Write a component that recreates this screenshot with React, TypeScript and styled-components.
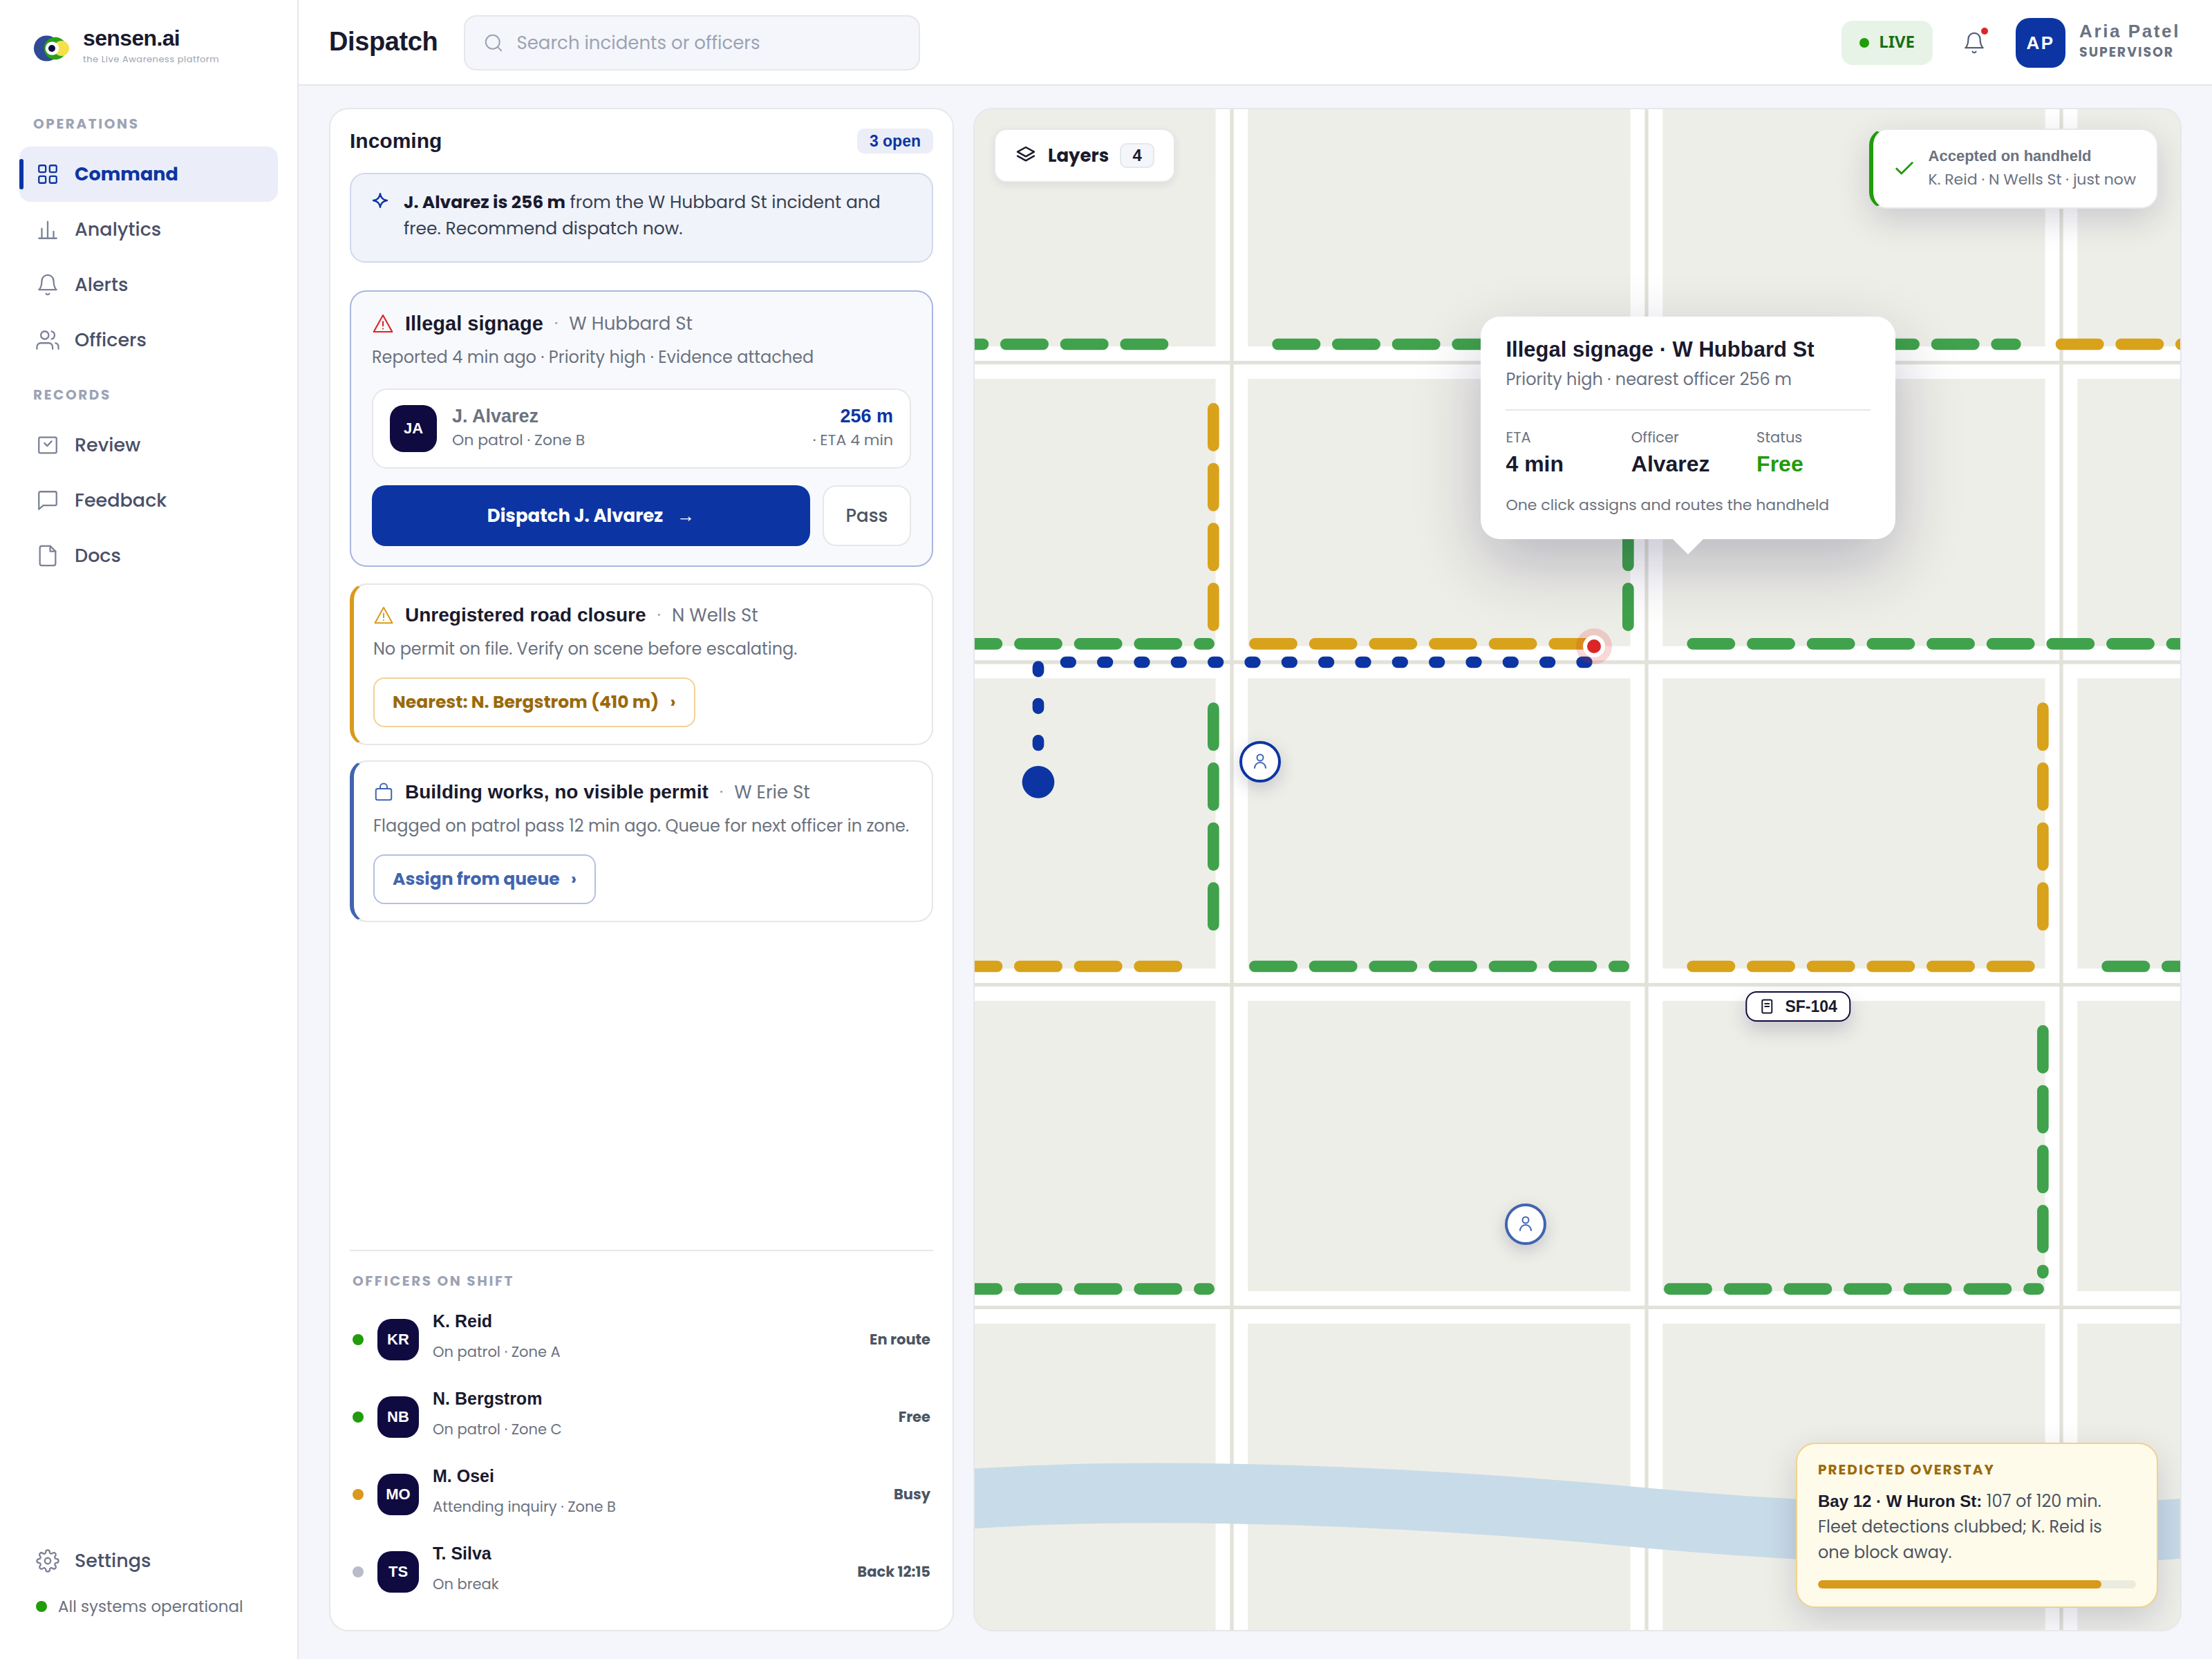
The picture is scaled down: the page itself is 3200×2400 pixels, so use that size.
import React from "react";
import styled, { createGlobalStyle, css } from "styled-components";

const c = {
  ink: "#1a1a2e",
  text: "#4b5563",
  muted: "#6b7280",
  faint: "#9ca3b4",
  line: "#e6e7e9",
  bg: "#f4f6fb",
  blue: "#0c35a3",
  blueSoft: "#ebeef8",
  steel: "#4065b0",
  navy: "#0f0a40",
  green: "#219c0a",
  amber: "#d99a1b",
  brown: "#9a6a0c",
  red: "#dc2626",
};
const head = `"Liberation Sans", Arial, sans-serif`;
const body = `Poppins, "Open Sans", sans-serif`;

const Global = createGlobalStyle`
  *, *::before, *::after { box-sizing: border-box; }
  body { margin: 0; background: ${c.bg}; color: ${c.ink}; font-family: ${body}; font-size: 26px; line-height: 1.5; }
  button, input { font: inherit; color: inherit; }
  h1, h2, h3, p, ul, dl, dd { margin: 0; padding: 0; }
  ul { list-style: none; }
  a { color: inherit; text-decoration: none; }
`;

const Shell = styled.div`
  display: grid;
  grid-template-columns: 432px minmax(0, 1fr);
  min-height: 100vh;
`;

/* ---------- sidebar ---------- */
const Sidebar = styled.aside`
  display: flex;
  flex-direction: column;
  padding: 34px 28px 50px;
  background: #fff;
  border-right: 2px solid ${c.line};
`;
const Brand = styled.div`
  display: flex;
  align-items: center;
  gap: 20px;
  height: 72px;
  padding: 0 20px;
  margin-bottom: 34px;
`;
const BrandText = styled.div`
  padding-bottom: 8px;
`;
const BrandName = styled.div`
  font: 700 32px/40px ${head};
  letter-spacing: -0.02em;
`;
const Tagline = styled.div`
  font-size: 13px;
  line-height: 22px;
  letter-spacing: 0.04em;
  color: ${c.faint};
`;
const Caption = styled.h2`
  font-size: 20px;
  line-height: 30px;
  font-weight: 700;
  letter-spacing: 0.13em;
  text-transform: uppercase;
  color: ${c.faint};
`;
const NavCaption = styled(Caption)`
  padding: 0 20px;
  margin: 24px 0 18px;
`;
const NavItem = styled.a<{ $active?: boolean }>`
  position: relative;
  display: flex;
  align-items: center;
  gap: 22px;
  height: 80px;
  padding: 0 24px;
  border-radius: 16px;
  font-size: 27px;
  font-weight: 500;
  color: #4a5068;
  svg { color: #7b8196; }
  ${(p) =>
    p.$active &&
    css`
      background: ${c.blueSoft};
      color: ${c.blue};
      font-weight: 700;
      svg { color: ${c.blue}; }
      &::before {
        content: "";
        position: absolute;
        left: 0;
        top: 18px;
        bottom: 18px;
        width: 6px;
        border-radius: 4px;
        background: ${c.blue};
      }
    `}
`;
const SideFoot = styled.div`
  margin-top: auto;
`;
const System = styled.div`
  display: flex;
  align-items: center;
  gap: 16px;
  height: 52px;
  padding: 0 24px;
  font-size: 23px;
  color: ${c.muted};
`;
const Dot = styled.span<{ $color: string; $size: number }>`
  flex: none;
  width: ${(p) => p.$size}px;
  height: ${(p) => p.$size}px;
  border-radius: 50%;
  background: ${(p) => p.$color};
`;

/* ---------- top bar ---------- */
const Main = styled.div`
  display: flex;
  flex-direction: column;
  min-width: 0;
`;
const Topbar = styled.header`
  display: flex;
  align-items: center;
  padding: 22px 44px 20px;
  background: #fff;
  border-bottom: 2px solid ${c.line};
`;
const PageTitle = styled.h1`
  padding-bottom: 4px;
  font: 700 38px/48px ${head};
  letter-spacing: -0.01em;
`;
const Search = styled.label`
  display: flex;
  align-items: center;
  gap: 18px;
  width: 660px;
  height: 80px;
  margin-left: 38px;
  padding: 0 26px;
  border: 2px solid ${c.line};
  border-radius: 18px;
  background: ${c.bg};
  color: ${c.faint};
  input {
    flex: 1;
    min-width: 0;
    padding: 0;
    border: 0;
    outline: 0;
    background: none;
    font-size: 26px;
  }
  input::placeholder { color: ${c.faint}; opacity: 1; }
`;
const TopRight = styled.div`
  display: flex;
  align-items: center;
  margin-left: auto;
`;
const Live = styled.span`
  display: flex;
  align-items: center;
  gap: 14px;
  height: 64px;
  padding: 0 26px;
  border-radius: 16px;
  background: #e7f3e6;
  color: #17701a;
  font: 700 24px/32px "Noto Sans", sans-serif;
`;
const LiveText = styled.span`
  padding-bottom: 4px;
`;
const BellButton = styled.button`
  position: relative;
  display: grid;
  place-items: center;
  width: 68px;
  height: 68px;
  margin: 0 26px;
  padding: 0;
  border: 0;
  background: none;
  color: #5a6078;
`;
const BellDot = styled.span`
  position: absolute;
  top: 12px;
  right: 14px;
  width: 10px;
  height: 10px;
  border-radius: 50%;
  background: ${c.red};
`;
const Avatar = styled.span<{ $size: number; $bg?: string }>`
  display: grid;
  place-items: center;
  flex: none;
  width: ${(p) => p.$size}px;
  height: ${(p) => p.$size}px;
  border-radius: 20px;
  background: ${(p) => p.$bg || c.navy};
  color: #fff;
  font: 700 22px/28px ${head};
`;
const UserAvatar = styled(Avatar)`
  font-size: 26px;
  letter-spacing: 0.1em;
`;
const User = styled.div`
  display: flex;
  align-items: center;
  gap: 20px;
  color: ${c.muted};
`;
const UserText = styled.div`
  padding: 0 2px 4px 0;
`;
const UserName = styled.div`
  font: 700 26px/32px ${head};
  letter-spacing: 0.1em;
`;
const UserRole = styled.div`
  font-size: 19px;
  line-height: 30px;
  font-weight: 700;
  letter-spacing: 0.1em;
`;

/* ---------- incoming panel ---------- */
const Content = styled.main`
  flex: 1;
  display: grid;
  grid-template-columns: 904px minmax(0, 1fr);
  gap: 28px;
  padding: 32px 44px 40px;
`;
const Panel = styled.section`
  display: flex;
  flex-direction: column;
  padding: 28px;
  border: 2px solid ${c.line};
  border-radius: 28px;
  background: #fff;
`;
const PanelHead = styled.div`
  display: flex;
  align-items: center;
  justify-content: space-between;
  height: 36px;
`;
const PanelTitle = styled.h2`
  font: 700 30px/36px ${head};
`;
const CountBadge = styled.span`
  padding: 0 18px;
  border-radius: 10px;
  background: ${c.blueSoft};
  color: ${c.blue};
  font: 700 23px/36px ${head};
`;
const Advice = styled.p`
  display: flex;
  gap: 20px;
  margin: 28px 0 40px;
  padding: 22px 28px 28px;
  border: 2px solid #cfd9ee;
  border-radius: 22px;
  background: #f0f3fa;
  color: #374151;
  font-size: 25px;
  line-height: 38px;
  svg { flex: none; margin-top: 2px; color: ${c.blue}; }
  strong { font-weight: 700; color: ${c.ink}; }
`;
const Cards = styled.div`
  display: flex;
  flex-direction: column;
  gap: 22px;
`;
const Card = styled.article<{ $accent?: string }>`
  border: 2px solid ${c.line};
  border-radius: 24px;
  padding: 24px 28px 24px;
  ${(p) => p.$accent && css`border-left: 6px solid ${p.$accent};`}
`;
const LeadCard = styled(Card)`
  margin-bottom: 2px;
  padding: 26px 30px 28px;
  border-color: #a9b7df;
  background: #f8f9fd;
`;
const CardHead = styled.div<{ $color: string }>`
  display: flex;
  align-items: center;
  height: 40px;
  svg { margin-right: 16px; color: ${(p) => p.$color}; }
`;
const CardTitle = styled.h3<{ $lead?: boolean }>`
  font: 700 ${(p) => (p.$lead ? 29 : 28)}px/40px ${head};
`;
const Street = styled.span`
  font-size: 26px;
  color: ${c.muted};
  &::before { content: "·"; margin: 0 16px; color: ${c.faint}; }
`;
const CardNote = styled.p`
  margin-top: 10px;
  font-size: 24px;
  line-height: 38px;
  color: ${c.muted};
`;
const OfficerBox = styled.div`
  display: flex;
  align-items: center;
  gap: 22px;
  margin: 26px 0 24px;
  padding: 21px 24px;
  border: 2px solid ${c.line};
  border-radius: 22px;
  background: #fff;
`;
const Lines = styled.div<{ $end?: boolean }>`
  ${(p) => p.$end && "margin-left: auto; text-align: right;"}
`;
const OfficerName = styled.div<{ $color: string }>`
  font: 700 27px/34px ${head};
  color: ${(p) => p.$color};
`;
const Small = styled.div`
  font-size: 22px;
  line-height: 36px;
  color: ${c.muted};
`;
const Actions = styled.div`
  display: flex;
  gap: 18px;
`;
const Button = styled.button`
  height: 88px;
  border: 2px solid ${c.line};
  border-radius: 20px;
  background: #fff;
  font-size: 26px;
`;
const Primary = styled(Button)`
  display: flex;
  align-items: center;
  justify-content: center;
  gap: 20px;
  flex: 1;
  border: 0;
  background: ${c.blue};
  color: #fff;
  font-weight: 700;
`;
const Secondary = styled(Button)`
  width: 128px;
  padding: 0;
  color: ${c.text};
  font-weight: 500;
`;
const Outline = styled.button<{ $color: string; $line: string }>`
  display: flex;
  align-items: center;
  gap: 16px;
  height: 72px;
  margin-top: 22px;
  padding: 0 26px;
  border: 2px solid ${(p) => p.$line};
  border-radius: 16px;
  background: #fff;
  color: ${(p) => p.$color};
  font-size: 25px;
  font-weight: 700;
`;
const Shift = styled.section`
  margin-top: auto;
  border-top: 2px solid ${c.line};
  padding: 28px 4px 0;
`;
const ShiftList = styled.ul`
  margin-top: 14px;
`;
const ShiftRow = styled.li`
  display: flex;
  align-items: center;
  gap: 20px;
  height: 112px;
`;
const ShiftName = styled.div`
  font: 700 25px/36px ${head};
`;
const ShiftNote = styled.div`
  font-size: 21px;
  line-height: 54px;
  color: ${c.muted};
`;
const ShiftState = styled.span`
  margin-left: auto;
  font-size: 21px;
  font-weight: 700;
  color: ${c.text};
`;

/* ---------- map ---------- */
const MapPanel = styled.section`
  position: relative;
  overflow: hidden;
  border: 2px solid ${c.line};
  border-radius: 28px;
  background: #eeeee8;
  > svg { position: absolute; inset: 0; width: 100%; height: 100%; }
`;
const shadow = "0 16px 48px rgba(15, 10, 64, 0.16)";
const LayersButton = styled.button`
  position: absolute;
  top: 28px;
  left: 28px;
  display: flex;
  align-items: center;
  gap: 16px;
  height: 78px;
  padding: 0 28px;
  border: 2px solid ${c.line};
  border-radius: 18px;
  background: #fff;
  font-size: 26px;
  font-weight: 700;
  box-shadow: 0 4px 12px rgba(15, 10, 64, 0.08);
`;
const LayerCount = styled.span`
  width: 50px;
  border: 2px solid ${c.line};
  border-radius: 10px;
  background: ${c.bg};
  font: 700 24px/32px ${head};
  text-align: center;
`;
const Toast = styled.div`
  position: absolute;
  top: 28px;
  right: 32px;
  display: flex;
  align-items: center;
  gap: 18px;
  padding: 22px 30px 22px 28px;
  border: 2px solid ${c.line};
  border-left: 6px solid ${c.green};
  border-radius: 24px;
  background: #fff;
  color: ${c.muted};
  box-shadow: ${shadow};
  svg { color: ${c.green}; }
`;
const ToastTitle = styled.div`
  font: 700 22px/32px ${head};
`;
const Pin = styled.div<{ $x: number; $y: number }>`
  position: absolute;
  left: ${(p) => p.$x}%;
  top: ${(p) => p.$y}%;
  transform: translate(-50%, -50%);
`;
const OfficerPin = styled(Pin)<{ $ring: string }>`
  display: grid;
  place-items: center;
  width: 60px;
  height: 60px;
  border: 4px solid ${(p) => p.$ring};
  border-radius: 50%;
  background: #fff;
  color: ${c.steel};
  box-shadow: 0 8px 24px rgba(15, 10, 64, 0.18);
`;
const IncidentPin = styled(Pin)`
  width: 32px;
  height: 32px;
  border: 6px solid #fff;
  border-radius: 50%;
  background: ${c.red};
  box-shadow: 0 0 0 10px rgba(220, 38, 38, 0.18);
`;
const VehiclePin = styled(Pin)`
  display: flex;
  align-items: center;
  gap: 14px;
  height: 44px;
  padding: 0 17px;
  border: 2px solid ${c.navy};
  border-radius: 16px;
  background: #fff;
  font: 700 23px/40px ${head};
  white-space: nowrap;
  box-shadow: 0 12px 28px rgba(15, 10, 64, 0.18);
`;
const Popup = styled.div`
  position: absolute;
  left: 59.2%;
  top: 300px;
  transform: translateX(-50%);
  width: 600px;
  padding: 28px 36px 32px;
  border-radius: 28px;
  background: #fff;
  box-shadow: 0 36px 96px rgba(15, 10, 64, 0.24);
  &::after {
    content: "";
    position: absolute;
    left: 50%;
    top: 100%;
    margin-left: -22px;
    border: 22px solid transparent;
    border-bottom: 0;
    border-top-color: #fff;
  }
`;
const PopupTitle = styled.h3`
  font: 700 31px/40px ${head};
`;
const PopupNote = styled.p`
  padding: 4px 0 24px;
  border-bottom: 2px solid ${c.line};
  font-size: 24px;
  line-height: 38px;
  color: ${c.muted};
`;
const Facts = styled.dl`
  display: grid;
  grid-template-columns: repeat(3, 1fr);
  gap: 16px;
  margin-top: 22px;
  dt { font-size: 21px; line-height: 34px; color: ${c.muted}; }
  dd { font: 700 32px/42px ${head}; }
`;
const FreeValue = styled.dd`
  color: ${c.green};
`;
const PopupFoot = styled.p`
  margin-top: 22px;
  font-size: 22px;
  line-height: 34px;
  color: ${c.muted};
`;
const Overstay = styled.div`
  position: absolute;
  right: 32px;
  bottom: 32px;
  width: 524px;
  padding: 22px 30px 26px;
  border: 2px solid #f0d28a;
  border-radius: 28px;
  background: #fffbea;
  box-shadow: ${shadow};
`;
const OverstayTitle = styled(Caption)`
  color: ${c.brown};
  letter-spacing: 0.1em;
`;
const OverstayText = styled.p`
  margin: 12px 0 22px;
  font-size: 24px;
  line-height: 37px;
  color: ${c.text};
  strong { font-family: ${head}; color: ${c.ink}; }
`;
const Track = styled.div`
  height: 12px;
  border-radius: 6px;
  background: #ecebdf;
  overflow: hidden;
`;
const Fill = styled.div`
  height: 100%;
  border-radius: 6px;
  background: ${c.amber};
`;

/* ---------- drawings ---------- */
const Icon = ({ size = 34, w = 1.6, children }: { size?: number; w?: number; children: React.ReactNode }) => (
  <svg width={size} height={size} viewBox="0 0 24 24" fill="none" stroke="currentColor" strokeWidth={w} strokeLinecap="round" strokeLinejoin="round" aria-hidden="true">
    {children}
  </svg>
);
const bell = (
  <>
    <path d="M18 8A6 6 0 0 0 6 8c0 7-3 9-3 9h18s-3-2-3-9" />
    <path d="M13.73 21a2 2 0 0 1-3.46 0" />
  </>
);
const warning = (
  <>
    <path d="M12 3 22 21H2z" />
    <path d="M12 10v4.5M12 17.6v.1" />
  </>
);
const icons = {
  grid: (
    <>
      <rect x="3" y="3" width="7" height="7" rx="1.5" />
      <rect x="14" y="3" width="7" height="7" rx="1.5" />
      <rect x="3" y="14" width="7" height="7" rx="1.5" />
      <rect x="14" y="14" width="7" height="7" rx="1.5" />
    </>
  ),
  chart: <path d="M3 21h18M6 21V11M12 21V4M18 21v-7" />,
  bell,
  users: (
    <>
      <path d="M17 21v-2a4 4 0 0 0-4-4H5a4 4 0 0 0-4 4v2" />
      <circle cx="9" cy="7" r="4" />
      <path d="M23 21v-2a4 4 0 0 0-3-3.87M16 3.13a4 4 0 0 1 0 7.75" />
    </>
  ),
  review: (
    <>
      <rect x="3" y="4" width="18" height="16" rx="1.5" />
      <path d="m8.700 10 2.800 2.800 4.500-4.800" />
    </>
  ),
  chat: <path d="M21 15.500a1.500 1.500 0 0 1-1.500 1.500H7.500L3 21V4.500A1.500 1.500 0 0 1 4.500 3h15A1.500 1.500 0 0 1 21 4.500z" />,
  doc: (
    <>
      <path d="M14.500 2H6a2 2 0 0 0-2 2v16a2 2 0 0 0 2 2h12a2 2 0 0 0 2-2V7.500z" />
      <path d="M14.500 2v5.500H20" />
    </>
  ),
  gear: (
    <>
      <circle cx="12" cy="12" r="3" />
      <path d="M19.4 15a1.65 1.65 0 0 0 .33 1.82l.06.06a2 2 0 0 1 0 2.83 2 2 0 0 1-2.83 0l-.06-.06a1.65 1.65 0 0 0-1.82-.33 1.65 1.65 0 0 0-1 1.51V21a2 2 0 0 1-2 2 2 2 0 0 1-2-2v-.09A1.65 1.65 0 0 0 9 19.4a1.65 1.65 0 0 0-1.82.33l-.06.06a2 2 0 0 1-2.83 0 2 2 0 0 1 0-2.83l.06-.06a1.65 1.65 0 0 0 .33-1.82 1.65 1.65 0 0 0-1.51-1H3a2 2 0 0 1-2-2 2 2 0 0 1 2-2h.09A1.65 1.65 0 0 0 4.6 9a1.65 1.65 0 0 0-.33-1.82l-.06-.06a2 2 0 0 1 0-2.83 2 2 0 0 1 2.83 0l.06.06a1.65 1.65 0 0 0 1.82.33H9a1.65 1.65 0 0 0 1-1.51V3a2 2 0 0 1 2-2 2 2 0 0 1 2 2v.09a1.65 1.65 0 0 0 1 1.51 1.65 1.65 0 0 0 1.82-.33l.06-.06a2 2 0 0 1 2.83 0 2 2 0 0 1 0 2.83l-.06.06a1.65 1.65 0 0 0-.33 1.82V9a1.65 1.65 0 0 0 1.51 1H21a2 2 0 0 1 2 2 2 2 0 0 1-2 2h-.09a1.65 1.65 0 0 0-1.51 1z" />
    </>
  ),
};

const Logo = () => (
  <svg width="52" height="38" viewBox="0 0 52 38" aria-hidden="true">
    <circle cx="19.500" cy="19" r="18.600" fill="#2f4a96" />
    <circle cx="32" cy="19" r="16.200" fill="#2aa01a" />
    <circle cx="41" cy="19" r="11" fill="#f6e04a" />
    <circle cx="27.500" cy="19" r="9.800" fill="#fff" />
    <circle cx="27" cy="19" r="5" fill="#0f0a40" />
  </svg>
);

const G = "#40a24c";
const A = "#d9a21b";
const curbs: [string, string][] = [
  ["M200 102H320", G],
  ["M370 102H690", G],
  ["M710 102H900", A],
  ["M180 232H340", G],
  ["M360 232H510", A],
  ["M550 232H900", G],
  ["M180 372H330", A],
  ["M360 372H520", G],
  ["M550 372H700", A],
  ["M730 372H900", G],
  ["M180 512H340", G],
  ["M540 512H700", G],
  ["M342 130V230", A],
  ["M342 260V360", G],
  ["M522 130V230", G],
  ["M702 260V360", A],
  ["M702 400V505", G],
];
const roads = "M0 110H1000M0 240H1000M0 380H1000M0 520H1000M170 0V660M350 0V660M530 0V660M710 0V660M890 0V660";

const CityMap = () => (
  <svg viewBox="0 0 1000 660" preserveAspectRatio="xMidYMid slice" fill="none" aria-hidden="true">
    <path d={roads} stroke="#fff" strokeWidth="14" />
    <path d={roads} stroke="#e2e2da" strokeWidth="1.6" />
    <path
      d="M0 640C100 618 170 607 238 603C320 597.500 430 602 520 610.500C610 619 690 621.500 762 616C850 609 920 600 1000 590"
      stroke="#c8dbe8"
      strokeWidth="26"
    />
    <g strokeWidth="5" strokeLinecap="round" strokeDasharray="16 10">
      {curbs.map(([d, color]) => (
        <path key={d} d={d} stroke={color} />
      ))}
    </g>
    <path d="M266 292V240H506" stroke={c.blue} strokeWidth="5" strokeLinecap="round" strokeLinejoin="round" strokeDasharray="2 14" />
    <circle cx="266" cy="292" r="7" fill={c.blue} />
  </svg>
);

const Person = () => (
  <Icon size={30}>
    <circle cx="12" cy="7.200" r="3.600" />
    <path d="M5.600 19.200a6.400 6.400 0 0 1 12.800 0" />
  </Icon>
);

/* ---------- data ---------- */
const operations = [
  { label: "Command", icon: icons.grid, active: true },
  { label: "Analytics", icon: icons.chart },
  { label: "Alerts", icon: icons.bell },
  { label: "Officers", icon: icons.users },
];
const records = [
  { label: "Review", icon: icons.review },
  { label: "Feedback", icon: icons.chat },
  { label: "Docs", icon: icons.doc },
];
const officers = [
  { initials: "KR", name: "K. Reid", note: "On patrol · Zone A", state: "En route", color: c.green },
  { initials: "NB", name: "N. Bergstrom", note: "On patrol · Zone C", state: "Free", color: c.green },
  { initials: "MO", name: "M. Osei", note: "Attending inquiry · Zone B", state: "Busy", color: c.amber },
  { initials: "TS", name: "T. Silva", note: "On break", state: "Back 12:15", color: "#b9bbc9" },
];
const stay = { used: 107, limit: 120 };

type Nav = { label: string; icon: React.ReactNode; active?: boolean };
const NavList = ({ items }: { items: Nav[] }) => (
  <>
    {items.map((n) => (
      <NavItem key={n.label} href="#" $active={n.active} aria-current={n.active ? "page" : undefined}>
        <Icon>{n.icon}</Icon>
        {n.label}
      </NavItem>
    ))}
  </>
);

export default function App() {
  return (
    <>
      <Global />
      <Shell>
        <Sidebar>
          <Brand>
            <Logo />
            <BrandText>
              <BrandName>sensen.ai</BrandName>
              <Tagline>the Live Awareness platform</Tagline>
            </BrandText>
          </Brand>
          <nav>
            <NavCaption>Operations</NavCaption>
            <NavList items={operations} />
            <NavCaption>Records</NavCaption>
            <NavList items={records} />
          </nav>
          <SideFoot>
            <NavList items={[{ label: "Settings", icon: icons.gear }]} />
            <System>
              <Dot $color={c.green} $size={16} />
              All systems operational
            </System>
          </SideFoot>
        </Sidebar>

        <Main>
          <Topbar>
            <PageTitle>Dispatch</PageTitle>
            <Search>
              <Icon size={30}>
                <circle cx="11" cy="11" r="8" />
                <path d="m21 21-4.300-4.300" />
              </Icon>
              <input type="search" placeholder="Search incidents or officers" aria-label="Search incidents or officers" />
            </Search>
            <TopRight>
              <Live>
                <Dot $color={c.green} $size={14} />
                <LiveText>LIVE</LiveText>
              </Live>
              <BellButton aria-label="Notifications">
                <Icon>{bell}</Icon>
                <BellDot />
              </BellButton>
              <User>
                <UserAvatar $size={72} $bg={c.blue}>AP</UserAvatar>
                <UserText>
                  <UserName>Aria Patel</UserName>
                  <UserRole>SUPERVISOR</UserRole>
                </UserText>
              </User>
            </TopRight>
          </Topbar>

          <Content>
            <Panel>
              <PanelHead>
                <PanelTitle>Incoming</PanelTitle>
                <CountBadge>3 open</CountBadge>
              </PanelHead>
              <Advice>
                <Icon size={28} w={2}>
                  <path d="M12 3.500C12.600 8.600 15 11.200 20.500 12 15 12.800 12.600 15.400 12 20.500 11.400 15.400 9 12.800 3.500 12 9 11.200 11.400 8.600 12 3.500z" />
                </Icon>
                <span>
                  <strong>J. Alvarez is 256 m</strong> from the W Hubbard St incident and free. Recommend dispatch now.
                </span>
              </Advice>
              <Cards>
                <LeadCard>
                  <CardHead $color={c.red}>
                    <Icon size={32}>{warning}</Icon>
                    <CardTitle $lead>Illegal signage</CardTitle>
                    <Street>W Hubbard St</Street>
                  </CardHead>
                  <CardNote>Reported 4 min ago · Priority high · Evidence attached</CardNote>
                  <OfficerBox>
                    <Avatar $size={68}>JA</Avatar>
                    <Lines>
                      <OfficerName $color={c.muted}>J. Alvarez</OfficerName>
                      <Small>On patrol · Zone B</Small>
                    </Lines>
                    <Lines $end>
                      <OfficerName $color={c.blue}>256 m</OfficerName>
                      <Small>· ETA 4 min</Small>
                    </Lines>
                  </OfficerBox>
                  <Actions>
                    <Primary>
                      Dispatch J. Alvarez <span>→</span>
                    </Primary>
                    <Secondary>Pass</Secondary>
                  </Actions>
                </LeadCard>
                <Card $accent={c.amber}>
                  <CardHead $color={c.amber}>
                    <Icon size={30}>{warning}</Icon>
                    <CardTitle>Unregistered road closure</CardTitle>
                    <Street>N Wells St</Street>
                  </CardHead>
                  <CardNote>No permit on file. Verify on scene before escalating.</CardNote>
                  <Outline $color={c.brown} $line="#f0d395">
                    Nearest: N. Bergstrom (410 m) <span>›</span>
                  </Outline>
                </Card>
                <Card $accent={c.steel}>
                  <CardHead $color={c.steel}>
                    <Icon size={30}>
                      <rect x="3" y="8" width="18" height="13" rx="2" />
                      <path d="M8 8V6a4 4 0 0 1 8 0v2" />
                    </Icon>
                    <CardTitle>Building works, no visible permit</CardTitle>
                    <Street>W Erie St</Street>
                  </CardHead>
                  <CardNote>Flagged on patrol pass 12 min ago. Queue for next officer in zone.</CardNote>
                  <Outline $color={c.steel} $line="#b3c1e0">
                    Assign from queue <span>›</span>
                  </Outline>
                </Card>
              </Cards>
              <Shift>
                <Caption>Officers on shift</Caption>
                <ShiftList>
                  {officers.map((o) => (
                    <ShiftRow key={o.initials}>
                      <Dot $color={o.color} $size={16} />
                      <Avatar $size={60}>{o.initials}</Avatar>
                      <div>
                        <ShiftName>{o.name}</ShiftName>
                        <ShiftNote>{o.note}</ShiftNote>
                      </div>
                      <ShiftState>{o.state}</ShiftState>
                    </ShiftRow>
                  ))}
                </ShiftList>
              </Shift>
            </Panel>

            <MapPanel aria-label="Map">
              <CityMap />
              <OfficerPin $x={23.7} $y={42.9} $ring={c.blue}><Person /></OfficerPin>
              <OfficerPin $x={45.7} $y={73.3} $ring={c.steel}><Person /></OfficerPin>
              <VehiclePin $x={68.3} $y={59}>
                <Icon size={24} w={2}>
                  <rect x="5" y="2.500" width="14" height="19" rx="2" />
                  <path d="M9 8h6M9 12h6" />
                </Icon>
                SF-104
              </VehiclePin>
              <Popup>
                <PopupTitle>Illegal signage · W Hubbard St</PopupTitle>
                <PopupNote>Priority high · nearest officer 256 m</PopupNote>
                <Facts>
                  <div>
                    <dt>ETA</dt>
                    <dd>4 min</dd>
                  </div>
                  <div>
                    <dt>Officer</dt>
                    <dd>Alvarez</dd>
                  </div>
                  <div>
                    <dt>Status</dt>
                    <FreeValue>Free</FreeValue>
                  </div>
                </Facts>
                <PopupFoot>One click assigns and routes the handheld</PopupFoot>
              </Popup>
              <IncidentPin $x={51.4} $y={35.3} />
              <LayersButton>
                <Icon size={32} w={1.8}>
                  <path d="m12 3 9 5-9 5-9-5zM3 12.500l9 5 9-5" />
                </Icon>
                Layers
                <LayerCount>4</LayerCount>
              </LayersButton>
              <Toast role="status">
                <Icon size={34} w={2}>
                  <path d="m4 12 5 5L20 6" />
                </Icon>
                <div>
                  <ToastTitle>Accepted on handheld</ToastTitle>
                  <Small>K. Reid · N Wells St · just now</Small>
                </div>
              </Toast>
              <Overstay>
                <OverstayTitle>Predicted overstay</OverstayTitle>
                <OverstayText>
                  <strong>Bay 12 · W Huron St:</strong> 107 of 120 min. Fleet detections clubbed; K. Reid is one block away.
                </OverstayText>
                <Track role="progressbar" aria-label="Minutes used" aria-valuenow={stay.used} aria-valuemax={stay.limit}>
                  <Fill style={{ width: `${(stay.used / stay.limit) * 100}%` }} />
                </Track>
              </Overstay>
            </MapPanel>
          </Content>
        </Main>
      </Shell>
    </>
  );
}
